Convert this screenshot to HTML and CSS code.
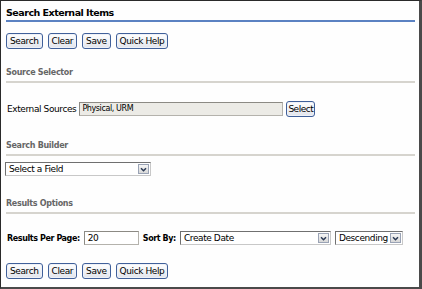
FILE: index.html
```html
<!DOCTYPE html>
<html>
<head>
<meta charset="utf-8">
<link rel="stylesheet" href="styles.css">
</head>
<body>
<div class="frame">
  <h1 class="title">Search External Items</h1>
  <div class="btnrow top">
    <button class="btn">Search</button>
    <button class="btn">Clear</button>
    <button class="btn">Save</button>
    <button class="btn">Quick Help</button>
  </div>

  <h2 class="section s1">Source Selector</h2>
  <div class="row sources">
    <span class="label">External Sources</span>
    <div class="textbox ro">Physical, URM</div>
    <button class="btn small">Select</button>
  </div>

  <h2 class="section s2">Search Builder</h2>
  <div class="row builder">
    <div class="select field"><span class="val">Select a Field</span><span class="arrow"><svg width="9" height="9" viewBox="0 0 9 9"><path d="M2 3.2 L4.5 5.7 L7 3.2" fill="none" stroke="#2b3a55" stroke-width="1.5"/></svg></span></div>
  </div>

  <h2 class="section s3">Results Options</h2>
  <div class="row results">
    <span class="label b">Results Per Page:</span>
    <div class="textbox perpage">20</div>
    <span class="label b sortlbl">Sort By:</span>
    <div class="select sort"><span class="val">Create Date</span><span class="arrow"><svg width="9" height="9" viewBox="0 0 9 9"><path d="M2 3.2 L4.5 5.7 L7 3.2" fill="none" stroke="#2b3a55" stroke-width="1.5"/></svg></span></div>
    <div class="select order"><span class="val">Descending</span><span class="arrow"><svg width="9" height="9" viewBox="0 0 9 9"><path d="M2 3.2 L4.5 5.7 L7 3.2" fill="none" stroke="#2b3a55" stroke-width="1.5"/></svg></span></div>
  </div>

  <div class="btnrow bottom">
    <button class="btn">Search</button>
    <button class="btn">Clear</button>
    <button class="btn">Save</button>
    <button class="btn">Quick Help</button>
  </div>
</div>
</body>
</html>
```

FILE: styles.css
```css
html, body {
  margin: 0;
  padding: 0;
  background: #ffffff;
}
body {
  font-family: "DejaVu Sans", Verdana, sans-serif;
  font-size: 9px;
  letter-spacing: -0.4px;
  color: #000;
}
.frame {
  box-sizing: border-box;
  width: 422px;
  height: 289px;
  border-top: 1px solid #2a2a2a;
  border-left: 1px solid #2a2a2a;
  border-right: 3px solid #4a4a4a;
  border-bottom: 2px solid #4a4a4a;
  padding: 0 4px 0 5px;
  background: #fefefe;
  overflow: hidden;
}
.title {
  margin: 0;
  padding-top: 5px;
  height: 14px;
  font-size: 9.5px;
  letter-spacing: -0.5px;
  font-weight: bold;
  line-height: 14px;
  border-bottom: 2px solid #5b82c2;
}
.btnrow {
  display: flex;
  gap: 5px;
}
.btnrow.top { margin-top: 11px; }
.btnrow.bottom { margin-top: 18px; }
.btn {
  font-family: "DejaVu Sans", Verdana, sans-serif;
  font-size: 9px;
  letter-spacing: -0.4px;
  height: 16px;
  line-height: 12px;
  padding: 0 3px;
  margin: 0;
  border: 1px solid #40609a;
  border-radius: 3px;
  background: linear-gradient(#ffffff, #e1e4ec);
  color: #000;
  box-shadow: inset 0 0 0 1px #eef1f7;
}
.btn.small {
  padding: 0 1px;
  letter-spacing: -0.5px;
}
.section {
  margin: 0;
  height: 12px;
  font-size: 8px;
  letter-spacing: -0.3px;
  font-weight: bold;
  color: #666;
  line-height: 12px;
  padding-bottom: 2px;
  border-bottom: 2px solid #d6d4ce;
}
.s1 { margin-top: 18px; }
.s2 { margin-top: 23px; }
.s3 { margin-top: 22px; }
.row {
  display: flex;
  align-items: center;
}
.sources {
  margin-top: 18px;
  padding-left: 1px;
  height: 16px;
}
.label {
  white-space: nowrap;
}
.label.b {
  font-weight: bold;
  font-size: 8px;
}
.textbox {
  box-sizing: border-box;
  height: 14px;
  border: 1px solid #b4b2ac;
  border-top-color: #8c8a84;
  border-left-color: #8c8a84;
  font-size: 8px;
  line-height: 12px;
  padding: 0 2px;
  background: #fff;
}
.textbox.ro {
  width: 204px;
  margin-left: 3px;
  margin-right: 3px;
  background: #ecebe6;
}
.builder {
  margin-top: 6px;
}
.select {
  box-sizing: border-box;
  height: 14px;
  display: flex;
  align-items: center;
  justify-content: space-between;
  border: 1px solid #c8c8c8;
  border-top-color: #707070;
  border-left-color: #707070;
  background: #fff;
  padding-left: 3px;
  padding-right: 1px;
  font-size: 9px;
}
.select .arrow {
  width: 11px;
  height: 10px;
  box-sizing: border-box;
  border: 1px solid #9aa3b5;
  background: linear-gradient(#f6f6f6, #d8d8d8);
  display: flex;
  align-items: center;
  justify-content: center;
}
.field { width: 146px; margin-left: -1px; }
.results {
  margin-top: 17px;
  padding-left: 1px;
  height: 14px;
}
.perpage {
  width: 55px;
  margin-left: 4px;
  font-size: 9px;
  padding-left: 3px;
}
.sortlbl { margin-left: 4px; }
.sort { width: 151px; margin-left: 4px; }
.order { width: 68px; margin-left: 4px; }
```
